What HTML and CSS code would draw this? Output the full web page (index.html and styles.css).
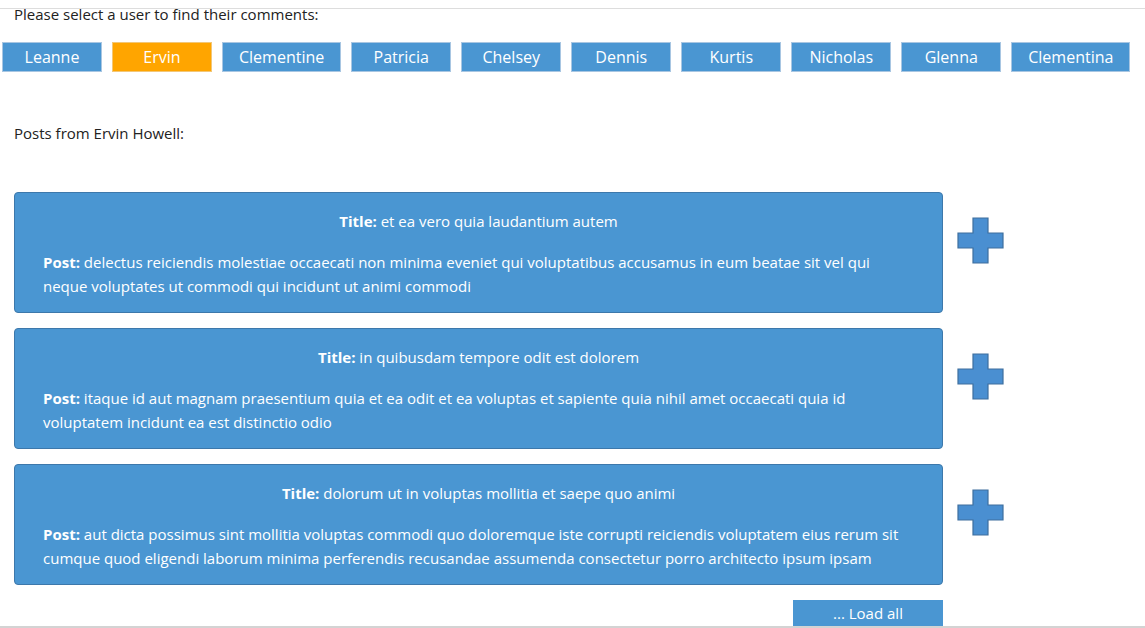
FILE: index.html
```html
<!DOCTYPE html>
<html lang="en">
<head>
<meta charset="utf-8">
<title>Posts</title>
<link rel="stylesheet" href="styles.css">
</head>
<body>
<div class="page">
  <p class="prompt">Please select a user to find their comments:</p>
  <div class="users">
    <button class="user">Leanne</button>
    <button class="user active">Ervin</button>
    <button class="user">Clementine</button>
    <button class="user">Patricia</button>
    <button class="user">Chelsey</button>
    <button class="user">Dennis</button>
    <button class="user">Kurtis</button>
    <button class="user">Nicholas</button>
    <button class="user">Glenna</button>
    <button class="user">Clementina</button>
  </div>
  <p class="heading">Posts from Ervin Howell:</p>
  <div class="posts">
    <div class="row">
      <div class="card">
        <p class="title"><b>Title:</b> et ea vero quia laudantium autem</p>
        <p class="body"><b>Post:</b> delectus reiciendis molestiae occaecati non minima eveniet qui voluptatibus accusamus in eum beatae sit vel qui neque voluptates ut commodi qui incidunt ut animi commodi</p>
      </div>
      <svg class="plus" width="47" height="47" viewBox="0 0 47 47"><path d="M16 1H31V16H46V31H31V46H16V31H1V16H16Z" fill="#4a8fd1" stroke="#3e6f9e" stroke-width="1.2"/></svg>
    </div>
    <div class="row">
      <div class="card">
        <p class="title"><b>Title:</b> in quibusdam tempore odit est dolorem</p>
        <p class="body"><b>Post:</b> itaque id aut magnam praesentium quia et ea odit et ea voluptas et sapiente quia nihil amet occaecati quia id voluptatem incidunt ea est distinctio odio</p>
      </div>
      <svg class="plus" width="47" height="47" viewBox="0 0 47 47"><path d="M16 1H31V16H46V31H31V46H16V31H1V16H16Z" fill="#4a8fd1" stroke="#3e6f9e" stroke-width="1.2"/></svg>
    </div>
    <div class="row">
      <div class="card">
        <p class="title"><b>Title:</b> dolorum ut in voluptas mollitia et saepe quo animi</p>
        <p class="body"><b>Post:</b> aut dicta possimus sint mollitia voluptas commodi quo doloremque iste corrupti reiciendis voluptatem eius rerum sit cumque quod eligendi laborum minima perferendis recusandae assumenda consectetur porro architecto ipsum ipsam</p>
      </div>
      <svg class="plus" width="47" height="47" viewBox="0 0 47 47"><path d="M16 1H31V16H46V31H31V46H16V31H1V16H16Z" fill="#4a8fd1" stroke="#3e6f9e" stroke-width="1.2"/></svg>
    </div>
    <div class="more-row">
      <button class="load">... Load all</button>
    </div>
  </div>
</div>
</body>
</html>
```

FILE: styles.css
```css
html, body {
  margin: 0;
  padding: 0;
  background: #fff;
}
body {
  font-family: "Open Sans", "Noto Sans", sans-serif;
  color: #222;
  overflow: hidden;
  height: 628px;
}
.page {
  margin-top: 8px;
  border-top: 1px solid #dddddd;
  border-bottom: 2px solid #d3d3d3;
  box-sizing: border-box;
  height: 620px;
  overflow: hidden;
}
.prompt {
  margin: -5px 0 0 14px;
  font-size: 15px;
  line-height: 20px;
}
.users {
  display: flex;
  gap: 10px;
  padding: 18px 0 0 2px;
}
.user, .load {
  font-family: inherit;
  font-size: 16px;
  color: #fff;
  background: #4a96d2;
  border: 1px solid #a8c6e2;
  min-width: 100px;
  height: 30px;
  padding: 0 16px;
  cursor: pointer;
}
.user.active {
  background: #ffa500;
  border-color: #f3c777;
}
.heading {
  margin: 51px 0 0 14px;
  font-size: 15px;
  line-height: 20px;
}
.posts {
  margin: 49px 0 0 14px;
  display: flex;
  flex-direction: column;
  gap: 15px;
}
.row {
  display: flex;
  align-items: flex-start;
  gap: 14px;
}
.plus {
  margin-top: 25px;
  flex: none;
}
.card {
  width: 929px;
  box-sizing: border-box;
  height: 121px;
  background: #4a96d2;
  border: 1px solid #3d78ab;
  border-radius: 4px;
  color: #fff;
  padding: 16px 28px 0 28px;
  font-size: 15px;
}
.card p {
  margin: 0;
  line-height: 24px;
}
.title {
  text-align: center;
  margin-bottom: 17px !important;
}
.more-row {
  display: flex;
  width: 929px;
  justify-content: flex-end;
}
.load {
  width: 150px;
  height: 26px;
  font-size: 15px;
  border: none;
  padding-top: 0;
}
```
